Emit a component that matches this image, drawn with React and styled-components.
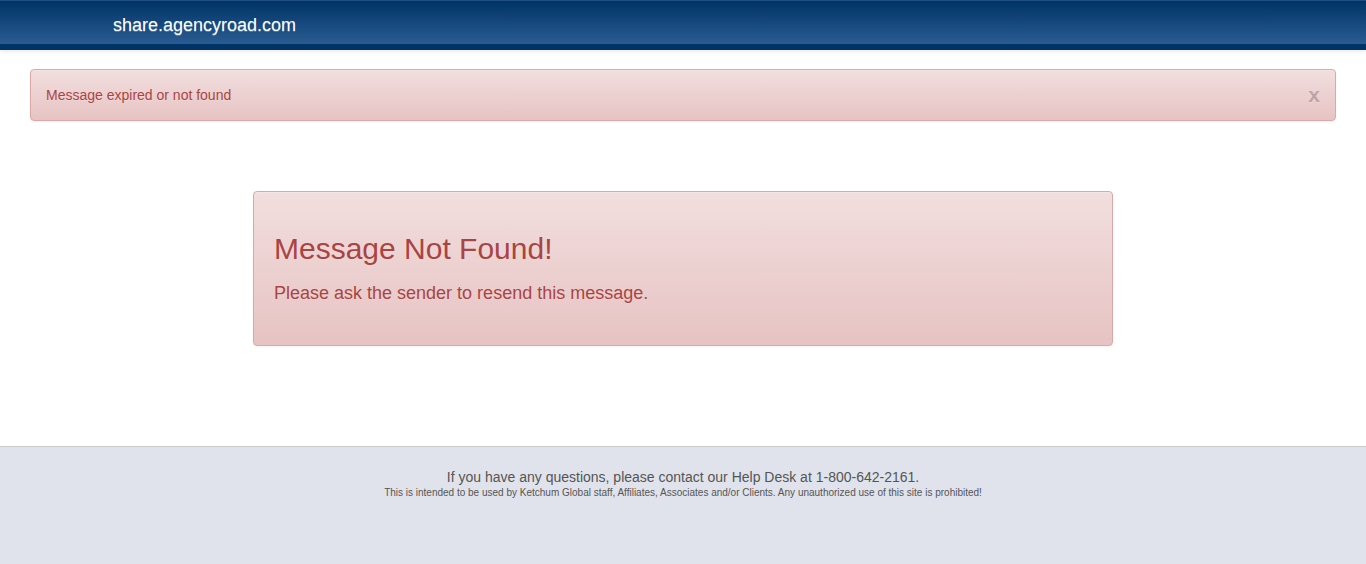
import React, { useState } from "react";
import styled, { createGlobalStyle } from "styled-components";

const GlobalStyle = createGlobalStyle`
  *, *::before, *::after { box-sizing: border-box; }
  body {
    margin: 0;
    background: #fff;
    color: #333;
    font-family: "Liberation Sans", Arial, sans-serif;
    font-size: 14px;
    line-height: 20px;
  }
`;

const Page = styled.div`
  min-height: 100vh;
  display: flex;
  flex-direction: column;
`;

const Navbar = styled.header`
  background: linear-gradient(#003366, #2a5c92);
  border-top: 1px solid #1f4f80;
  border-bottom: 6px solid #003366;
  box-shadow: 0 1px 5px rgba(0, 0, 0, 0.1);
`;

const NavInner = styled.div`
  max-width: 1170px;
  margin: 0 auto;
  padding: 0 15px;
`;

const Brand = styled.a`
  display: inline-block;
  padding: 14px 0 9px;
  color: #fff;
  font-size: 18px;
  line-height: 20px;
  text-decoration: none;
  text-shadow: 0 1px 0 rgba(255, 255, 255, 0.25);
`;

const Panel = styled.section`
  background: linear-gradient(#f2dede, #e7c3c3);
  border: 1px solid #dca7a7;
  border-radius: 4px;
  box-shadow: inset 0 1px 0 rgba(255, 255, 255, 0.25), 0 1px 2px rgba(0, 0, 0, 0.05);
  color: #a94442;
  text-shadow: 0 1px 0 rgba(255, 255, 255, 0.2);
`;

const Alert = styled(Panel)`
  display: flex;
  align-items: center;
  justify-content: space-between;
  margin: 19px 30px 0;
  padding: 15px;
`;

const CloseButton = styled.button`
  padding: 0;
  border: 0;
  background: none;
  color: #000;
  opacity: 0.2;
  font: bold 21px/20px "Liberation Sans", Arial, sans-serif;
  text-shadow: 0 1px 0 #fff;
  cursor: pointer;
`;

const Main = styled.main`
  padding: 70px 30px 100px;
`;

const Notice = styled(Panel)`
  max-width: 860px;
  margin: 0 auto;
  padding: 40px 20px;
`;

const Title = styled.h1`
  margin: 0 0 18px;
  font-size: 30px;
  font-weight: 500;
  line-height: 33px;
`;

const Subtitle = styled.h2`
  margin: 0 0 2px;
  font-size: 18px;
  font-weight: 500;
  line-height: 20px;
`;

const Footer = styled.footer`
  flex: 1;
  padding: 20px 30px;
  border-top: 1px solid #ccc;
  background: #e0e3eb;
  color: #555;
  text-align: center;
`;

const Help = styled.p`
  margin: 0;
  font-size: 14px;
  line-height: 20px;
`;

const Legal = styled.p`
  margin: 0;
  font-size: 10px;
  line-height: 12px;
`;

export default function App() {
  const [alertOpen, setAlertOpen] = useState(true);
  return (
    <Page>
      <GlobalStyle />
      <Navbar>
        <NavInner>
          <Brand href="/">share.agencyroad.com</Brand>
        </NavInner>
      </Navbar>
      {alertOpen && (
        <Alert role="alert">
          <span>Message expired or not found</span>
          <CloseButton type="button" onClick={() => setAlertOpen(false)}>x</CloseButton>
        </Alert>
      )}
      <Main>
        <Notice>
          <Title>Message Not Found!</Title>
          <Subtitle>Please ask the sender to resend this message.</Subtitle>
        </Notice>
      </Main>
      <Footer>
        <Help>If you have any questions, please contact our Help Desk at 1-800-642-2161.</Help>
        <Legal>
          This is intended to be used by Ketchum Global staff, Affiliates, Associates and/or Clients. Any unauthorized use of this site is prohibited!
        </Legal>
      </Footer>
    </Page>
  );
}
